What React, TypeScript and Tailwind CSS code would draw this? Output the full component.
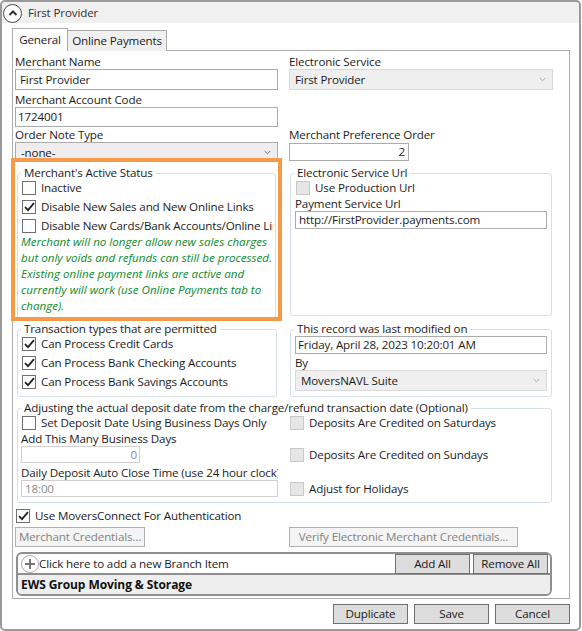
import type { ReactNode } from "react";

function Chevron({ muted }: { muted?: boolean }) {
  return (
    <svg width="7" height="5" viewBox="0 0 7 5" className="shrink-0">
      <path d="M0.7 1l2.8 2.8L6.3 1" fill="none" stroke={muted ? "#a8a8a8" : "#707070"} strokeWidth="1" />
    </svg>
  );
}

function CheckBox({ checked, disabled }: { checked?: boolean; disabled?: boolean }) {
  return (
    <span
      className={`flex size-[14px] shrink-0 items-center justify-center border ${
        disabled ? "border-[#c8c8c8] bg-[#e6e6e6]" : "border-[#707070] bg-white"
      }`}
    >
      {checked ? (
        <svg width="11" height="10" viewBox="0 0 11 10">
          <path d="M1 5.2l3 3L10 1.2" fill="none" stroke="#222" strokeWidth="1.8" />
        </svg>
      ) : null}
    </span>
  );
}

function CheckRow({
  label,
  checked,
  disabled,
  className,
}: {
  label: string;
  checked?: boolean;
  disabled?: boolean;
  className?: string;
}) {
  return (
    <div className={`flex h-[16px] items-center gap-[5px] overflow-hidden whitespace-nowrap ${className ?? ""}`}>
      <CheckBox checked={checked} disabled={disabled} />
      <span>{label}</span>
    </div>
  );
}

function Label({ children, className }: { children: ReactNode; className?: string }) {
  return <div className={`h-[15px] overflow-hidden whitespace-nowrap leading-[15px] ${className ?? ""}`}>{children}</div>;
}

function Field({ value, className }: { value: string; className?: string }) {
  return (
    <div className={`flex items-center border border-[#ababab] bg-white whitespace-nowrap ${className ?? ""}`}>
      {value}
    </div>
  );
}

function Select({ value, className, muted }: { value: string; className?: string; muted?: boolean }) {
  return (
    <div
      className={`flex h-[21px] items-center justify-between border pl-[5px] pr-[6px] ${
        muted ? "border-[#d9d9d9] bg-[#efefef]" : "border-[#acacac] bg-[#eeeeee]"
      } ${className ?? ""}`}
    >
      <span>{value}</span>
      <Chevron muted={muted} />
    </div>
  );
}

function Group({ title, children, className }: { title: string; children: ReactNode; className?: string }) {
  return (
    <fieldset className={`min-w-0 rounded-[3px] border border-[#d5dfe5] px-[4px] ${className ?? ""}`}>
      <legend className="-ml-[1px] -mb-[1px] whitespace-nowrap px-[3px] leading-[14px]">{title}</legend>
      {children}
    </fieldset>
  );
}

function ActionButton({ label, className }: { label: string; className?: string }) {
  return (
    <button
      type="button"
      className={`flex items-center justify-center border border-[#707070] bg-[#dddddd] text-[#1a1a1a] ${className ?? ""}`}
    >
      {label}
    </button>
  );
}

function DisabledButton({ label, className }: { label: string; className?: string }) {
  return (
    <button
      type="button"
      className={`flex h-[20px] items-center justify-center border border-[#adb2b5] bg-[#f4f4f4] text-[#838383] ${className ?? ""}`}
    >
      {label}
    </button>
  );
}

export default function App() {
  return (
    <div className="h-[631px] w-[582px] overflow-hidden bg-white font-['Open_Sans',sans-serif] text-[11.6px] tracking-[-0.14px] text-[#1c1c1c]">
      <div className="flex h-[631px] w-[581px] flex-col rounded-[5px] border-2 border-[#9a9a9a]">
        <div className="flex h-[21px] shrink-0 items-center gap-[6px] rounded-t-[4px] bg-[#f0f0f0] pl-[1px] pt-[1px]">
          <span className="flex size-[19px] items-center justify-center rounded-full border border-[#4a4a4a] bg-white">
            <svg width="10" height="8" viewBox="0 0 10 8">
              <path d="M1.5 6L5 2.5 8.5 6" fill="none" stroke="#333" strokeWidth="2" />
            </svg>
          </span>
          <span className="text-[#333]">First Provider</span>
        </div>

        <div className="ml-[10px] mr-[9px] mt-[5px]">
          <div className="relative z-10 -mb-px flex items-end">
            <div className="flex h-[23px] w-[56px] items-center justify-center border border-b-0 border-[#acacac] bg-white">General</div>
            <div className="flex h-[21px] w-[99px] items-center justify-center border border-b-0 border-l-0 border-[#acacac] bg-[#f0f0f0]">Online Payments</div>
          </div>

          <div className="h-[549px] border border-[#acacac] px-[2px] pt-[3px]">
            <div className="grid grid-cols-[263px_264px] gap-x-[11px]">
              <div>
                <Label>Merchant Name</Label>
                <Field value="First Provider" className="h-[21px] pl-[4px]" />
                <Label className="mt-[2px]">Merchant Account Code</Label>
                <Field value="1724001" className="h-[20px] pl-[2px]" />
                <Label>Order Note Type</Label>
                <Select value="-none-" />
              </div>
              <div>
                <Label>Electronic Service</Label>
                <Select value="First Provider" muted />
                <Label className="mt-[37px]">Merchant Preference Order</Label>
                <Field value="2" className="mt-[1px] h-[18px] w-[120px] justify-end pr-[3px]" />
              </div>
            </div>

            <div className="grid grid-cols-[263px_264px] gap-x-[11px]">
              <div className="relative z-10 -mx-[4px] -mt-[5px] h-[163px] overflow-hidden border-[4px] border-[#f79a48] bg-white px-[2px] pt-[4px]">
                <Group title="Merchant's Active Status" className="h-[155px]">
                  <CheckRow label="Inactive" className="mt-[1px]" />
                  <CheckRow label="Disable New Sales and New Online Links" checked className="mt-[3px]" />
                  <CheckRow label="Disable New Cards/Bank Accounts/Online Links" className="mt-[3px] w-[251px]" />
                  <p className="-ml-[1px] w-[256px] italic leading-[16px] tracking-normal text-[#0d8a2c]">
                    Merchant will no longer allow new sales charges but only voids and refunds can still be processed. Existing online payment links are active and currently will work (use Online Payments tab to change).
                  </p>
                </Group>
              </div>
              <Group title="Electronic Service Url" className="ml-[1px] mr-[1px] mt-[3px] h-[150px]">
                <CheckRow label="Use Production Url" disabled className="mt-[1px] pl-[1px]" />
                <Label>Payment Service Url</Label>
                <Field value="http://FirstProvider.payments.com" className="h-[18px] w-[252px] pl-[3px]" />
              </Group>
            </div>

            <div className="mt-[1px] grid grid-cols-[263px_264px] gap-x-[11px]">
              <Group title="Transaction types that are permitted" className="ml-[2px] mr-[1px] h-[75px]">
                <CheckRow label="Can Process Credit Cards" checked className="mt-[1px]" />
                <CheckRow label="Can Process Bank Checking Accounts" checked className="mt-[3px]" />
                <CheckRow label="Can Process Bank Savings Accounts" checked className="mt-[3px]" />
              </Group>
              <Group title="This record was last modified on" className="ml-[1px] mr-[1px] h-[75px]">
                <Field value="Friday, April 28, 2023 10:20:01 AM" className="mt-[1px] h-[18px] pl-[2px]" />
                <Label className="mt-[1px]">By</Label>
                <Select value="MoversNAVL Suite" muted />
              </Group>
            </div>

            <Group
              title="Adjusting the actual deposit date from the charge/refund transaction date (Optional)"
              className="ml-[2px] mt-[4px] h-[102px] w-[535px]"
            >
              <div className="grid grid-cols-[268px_1fr]">
                <div>
                  <CheckRow label="Set Deposit Date Using Business Days Only" className="mt-[1px]" />
                  <Label className="-ml-[1px]">Add This Many Business Days</Label>
                  <Field value="0" className="h-[17px] w-[119px] -ml-[1px] justify-end border-[#d0d0d0] pr-[2px] text-[#8c8c8c]" />
                  <Label className="-ml-[1px] mt-[2px] w-[257px]">Daily Deposit Auto Close Time (use 24 hour clock)</Label>
                  <Field value="18:00" className="h-[17px] w-[257px] -ml-[1px] border-[#d0d0d0] pl-[3px] text-[#8c8c8c]" />
                </div>
                <div>
                  <CheckRow label="Deposits Are Credited on Saturdays" disabled className="mt-[1px]" />
                  <CheckRow label="Deposits Are Credited on Sundays" disabled className="mt-[16px]" />
                  <CheckRow label="Adjust for Holidays" disabled className="mt-[18px]" />
                </div>
              </div>
            </Group>

            <CheckRow label="Use MoversConnect For Authentication" checked className="ml-[1px] mt-[5px]" />

            <div className="mt-[3px] flex">
              <DisabledButton label="Merchant Credentials..." className="w-[130px]" />
              <DisabledButton label="Verify Electronic Merchant Credentials..." className="ml-[144px] w-[229px]" />
            </div>

            <div className="ml-[1px] mt-[5px] w-[536px] rounded-[6px] border-2 border-[#8f8f8f]">
              <div className="flex h-[19px] items-center justify-between">
                <div className="flex items-center">
                  <span className="ml-[3px] flex size-[18px] items-center justify-center rounded-full border border-[#a8a8a8]">
                    <svg width="10" height="10" viewBox="0 0 10 10">
                      <path d="M5 0v10M0 5h10" stroke="#777" strokeWidth="2" />
                    </svg>
                  </span>
                  <span>Click here to add a new Branch Item</span>
                </div>
                <div className="flex gap-[3px] pr-[2px]">
                  <ActionButton label="Add All" className="h-[20px] w-[75px]" />
                  <ActionButton label="Remove All" className="h-[20px] w-[75px]" />
                </div>
              </div>
              <div className="flex h-[21px] items-center rounded-b-[4px] border-t-2 border-[#8f8f8f] bg-[#eeeeee] pl-[3px] text-[12px] font-bold tracking-[-0.08px] text-[#111]">
                EWS Group Moving &amp; Storage
              </div>
            </div>
          </div>

          <div className="mt-[5px] flex justify-end gap-[6px]">
            <ActionButton label="Duplicate" className="h-[20px] w-[75px]" />
            <ActionButton label="Save" className="h-[20px] w-[75px]" />
            <ActionButton label="Cancel" className="h-[20px] w-[75px]" />
          </div>
        </div>
      </div>
    </div>
  );
}
